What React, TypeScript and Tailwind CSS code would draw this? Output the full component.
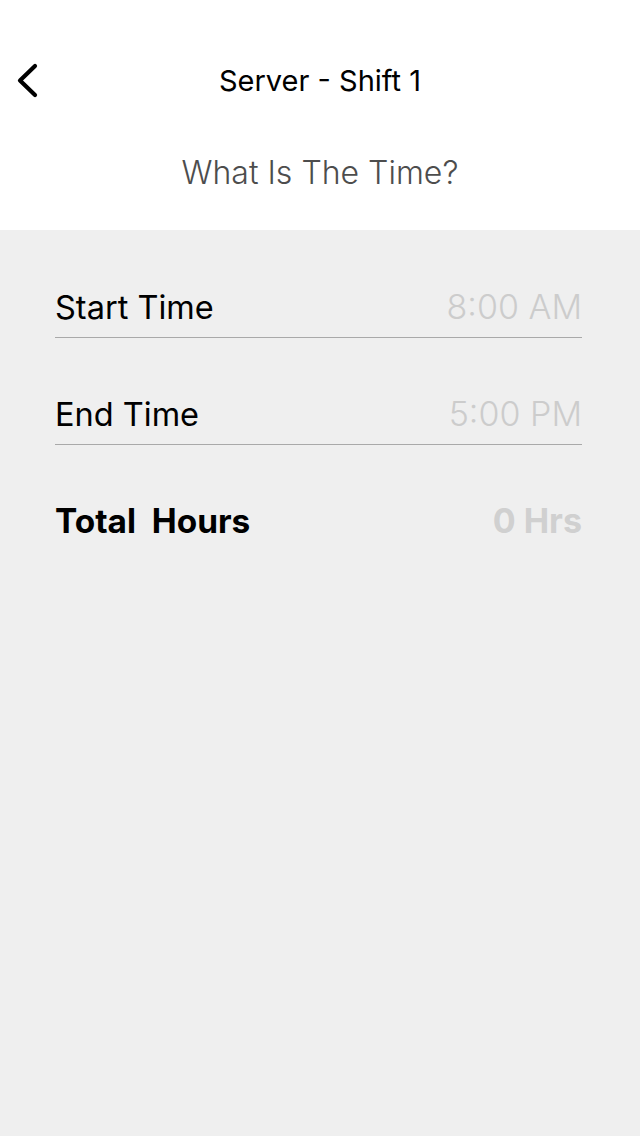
const rows = [
  { label: 'Start Time', value: '8:00 AM' },
  { label: 'End Time', value: '5:00 PM' },
];

function BackChevron() {
  return (
    <svg width="24" height="36" viewBox="0 0 24 36" fill="none">
      <polyline
        points="19,4 4,18.5 19,33"
        stroke="#000"
        strokeWidth="4.2"
        strokeLinecap="round"
        strokeLinejoin="round"
      />
    </svg>
  );
}

export default function App() {
  return (
    <div
      className="min-h-[1136px] w-full flex flex-col bg-[#efefef] text-black"
      style={{ fontFamily: 'Inter, "Liberation Sans", sans-serif' }}
    >
      {/* Header */}
      <div className="bg-white h-[230px] flex flex-col">
        <div className="grid grid-cols-[1fr_auto_1fr] items-center h-[80px] mt-[40px]">
          <div className="pl-[16px] flex items-center">
            <BackChevron />
          </div>
          <h1 className="text-[29px] font-normal leading-none">Server - Shift 1</h1>
          <div />
        </div>
        <p className="text-center text-[32px] font-light text-[#4d4d4d] leading-none mt-[37px]">
          What Is The Time?
        </p>
      </div>

      {/* Form */}
      <div className="px-[55px] pr-[58px] pt-[63px]">
        {rows.map((row) => (
          <div
            key={row.label}
            className="flex items-end justify-between border-b border-[#a9a9a9] pb-[13px] mb-[62px] h-[45px]"
          >
            <span className="text-[32.5px] leading-none">{row.label}</span>
            <span className="text-[34px] font-light leading-none text-[#cccccc]">{row.value}</span>
          </div>
        ))}
        <div className="flex items-end justify-between -mt-[3px]">
          <span className="text-[33.4px] font-bold leading-none">Total&nbsp; Hours</span>
          <span className="text-[34px] font-bold leading-none text-[#d0d0d0]">0 Hrs</span>
        </div>
      </div>
    </div>
  );
}
